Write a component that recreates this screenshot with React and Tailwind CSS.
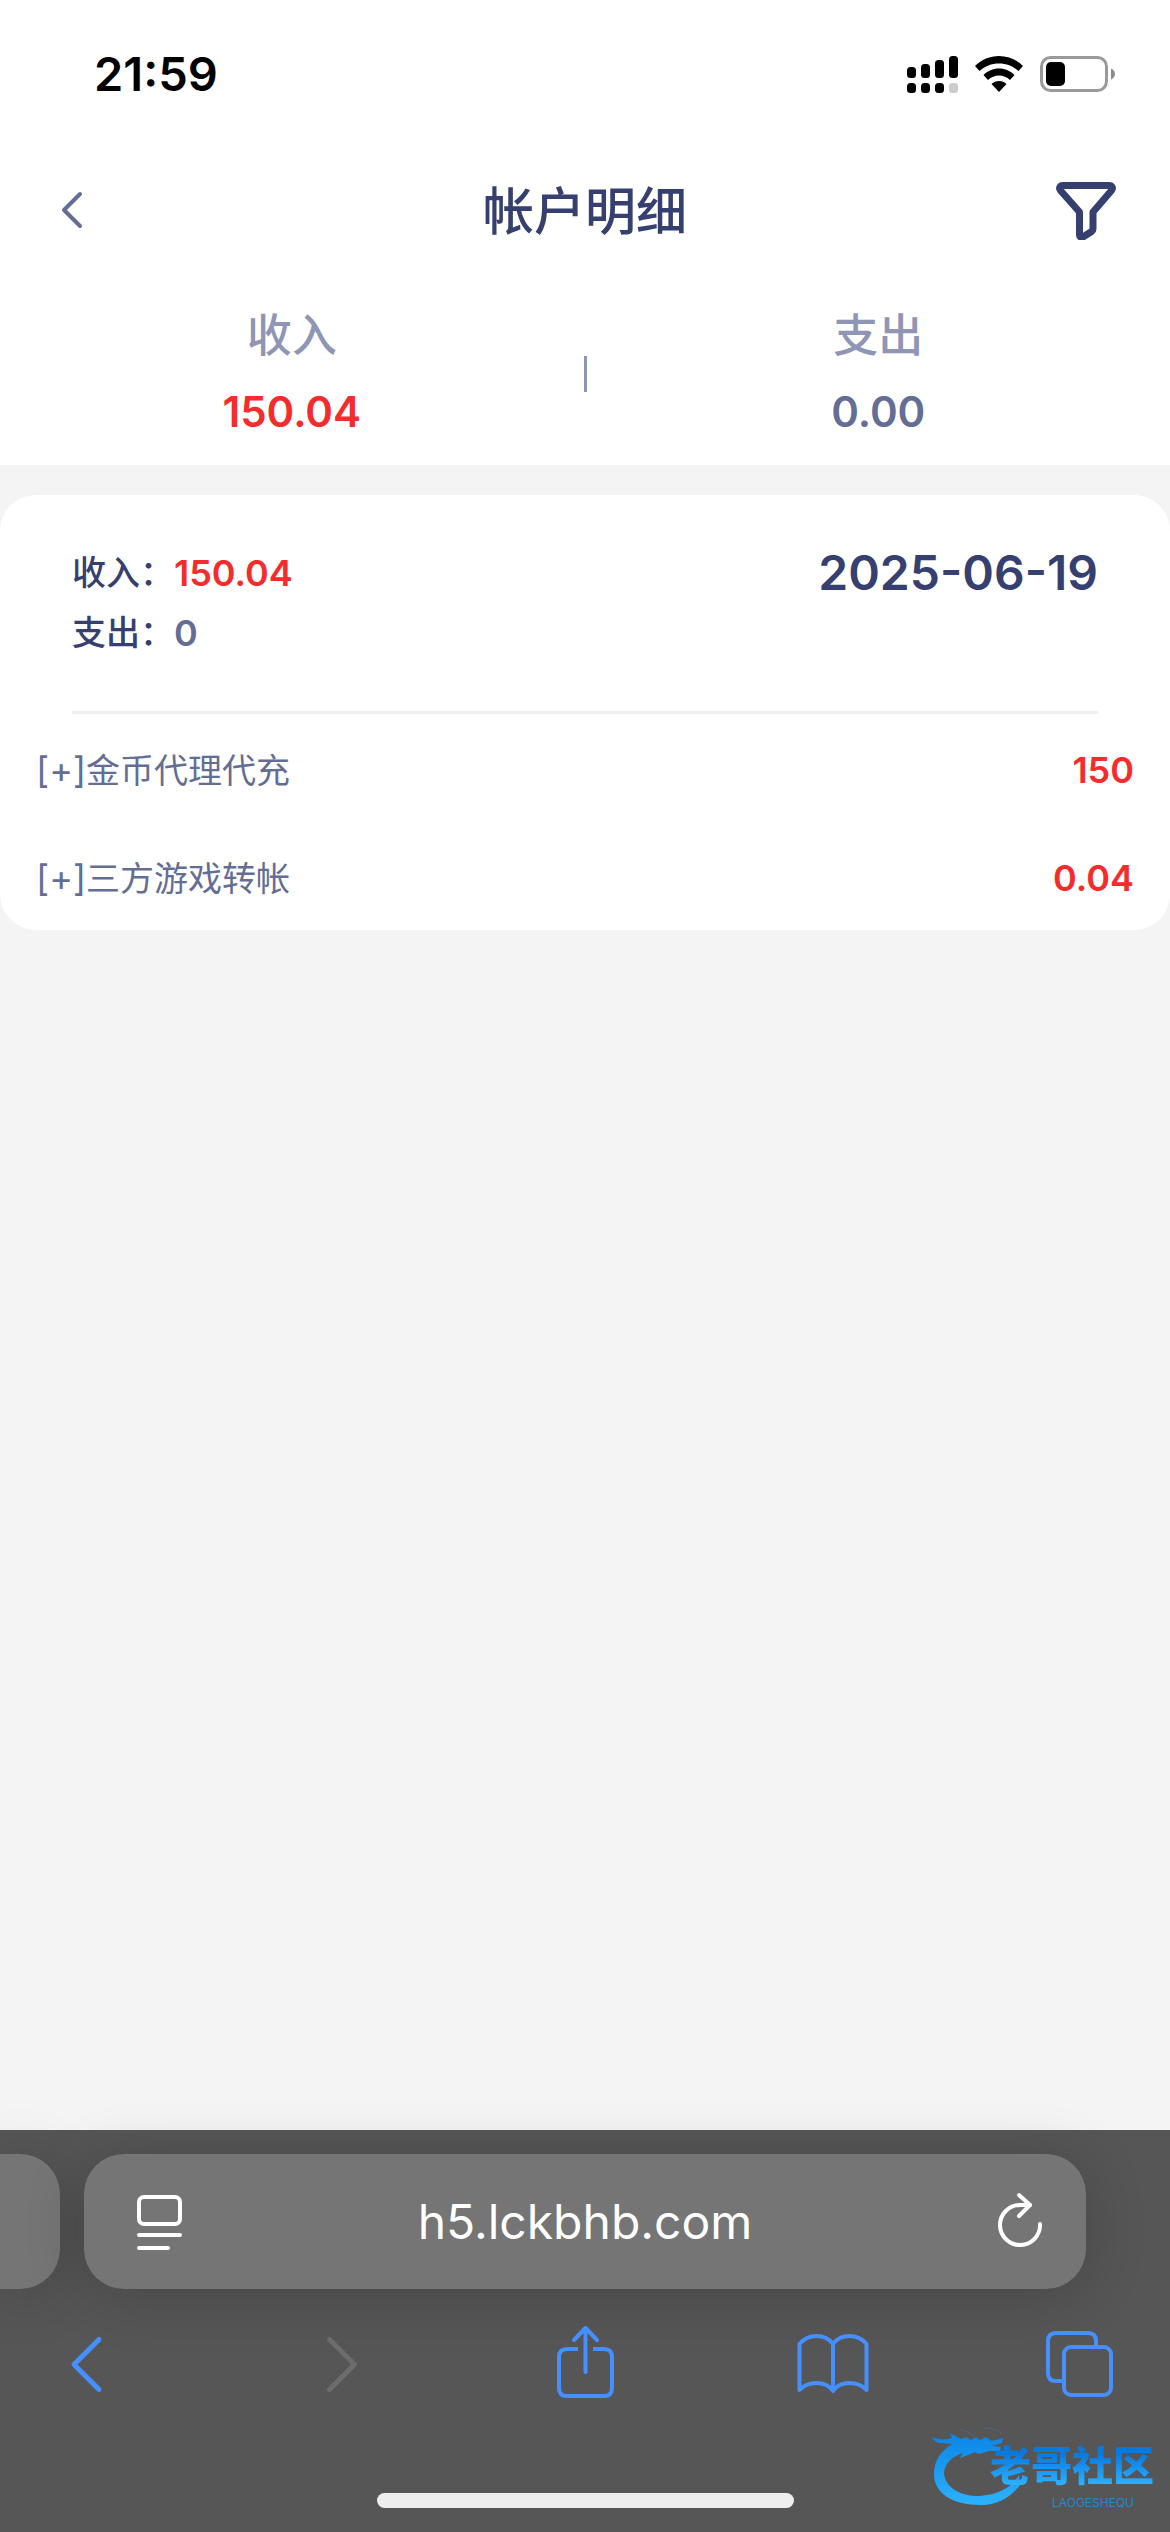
const ENTRIES = [
  { name: '金币代理代充', amount: '150' },
  { name: '三方游戏转帐', amount: '0.04' },
];

const SIGNAL_BARS = [
  { x: 0, top: 12, dot: '#000' },
  { x: 14, top: 9, dot: '#000' },
  { x: 28, top: 5, dot: '#000' },
  { x: 42, top: 1, dot: '#cbcbcb' },
];

function StatusBar() {
  return (
    <div className="flex h-[148px] items-center justify-between pr-[54px] pl-[94px]">
      <span className="text-[47px] leading-[60px] font-semibold text-black">21:59</span>
      <div className="flex items-center gap-[17px]">
        <svg width="51" height="40" viewBox="0 0 51 40" aria-label="信号">
          {SIGNAL_BARS.map((bar) => (
            <g key={bar.x}>
              <rect x={bar.x} y={bar.top + 1} width="9" height={23 - bar.top} rx="3.5" />
              <rect x={bar.x} y="29" width="9" height="10" rx="3.5" fill={bar.dot} />
            </g>
          ))}
        </svg>
        <svg width="48" height="40" viewBox="0 0 48 40" aria-label="Wi-Fi">
          <path d="M24 2C33 2 41.500 5.500 48 12L43.500 17C38 12 31.500 9.500 24 9.500S10 12 4.500 17L0 12C6.500 5.500 15 2 24 2Z" />
          <path d="M24 14.500C30 14.500 35.500 17 39.500 21L35 26C32 23 28 21.500 24 21.500S16 23 13 26L8.500 21C12.500 17 18 14.500 24 14.500Z" />
          <path d="M24 27C27 27 29.500 28 31.500 30L24 38L16.500 30C18.500 28 21 27 24 27Z" />
        </svg>
        <svg width="76" height="40" viewBox="0 0 76 40" aria-label="电量">
          <rect x="1.500" y="3.500" width="65" height="33" rx="9" fill="none" stroke="#9a9a9a" strokeWidth="3" />
          <rect x="6" y="8" width="19" height="24" rx="5" />
          <path d="M71 14.500C73.500 15.500 75 17.500 75 20S73.500 24.500 71 25.500Z" fill="#8c8c8c" />
        </svg>
      </div>
    </div>
  );
}

function PageHeader() {
  return (
    <header className="flex h-[124px] items-center justify-between px-[54px]">
      <button type="button" aria-label="返回" className="cursor-pointer">
        <svg width="60" height="60" viewBox="0 0 60 60" fill="none" stroke="#646e95" strokeWidth="4" strokeLinecap="round" strokeLinejoin="round">
          <path d="M26 14L10 30L26 46" />
        </svg>
      </button>
      <h1 className="pt-1 text-[51px] leading-[60px] font-medium text-[#364070]">帐户明细</h1>
      <button type="button" aria-label="筛选" className="cursor-pointer">
        <svg width="60" height="60" viewBox="0 0 60 60" fill="none" stroke="#364070" strokeWidth="7" strokeLinejoin="round">
          <path d="M7 5.500H53C56 5.500 57.500 8 55.500 10.500L37 32V49Q37 50.500 35.500 51.500L27 57Q23.500 58 23.500 55V32L4.500 10.500C2.500 8 4 5.500 7 5.500Z" />
        </svg>
      </button>
    </header>
  );
}

function Summary() {
  return (
    <section className="flex items-center pt-[34px] pb-[23px] text-center">
      <div className="flex-1">
        <p className="text-[45px] leading-[60px] font-medium text-[#8f96b5]">收入</p>
        <p className="mt-4 text-[42px] leading-[60px] font-semibold text-[#f52c2c]">150.04</p>
      </div>
      <div className="h-9 w-[3px] bg-[#8f96b5]" />
      <div className="flex-1">
        <p className="text-[45px] leading-[60px] font-medium text-[#8f96b5]">支出</p>
        <p className="mt-4 text-[42px] leading-[60px] font-semibold text-[#646e95]">0.00</p>
      </div>
    </section>
  );
}

function DayCard() {
  return (
    <section className="rounded-[36px] bg-white">
      <div className="mx-[72px] flex justify-between border-b-3 border-[#efefef] py-12 text-[#364070]">
        <dl className="text-[34px] leading-[60px] font-medium">
          <div className="flex">
            <dt>收入：</dt>
            <dd className="text-[36px] font-semibold text-[#f52c2c]">150.04</dd>
          </div>
          <div className="flex">
            <dt>支出：</dt>
            <dd className="text-[36px] font-semibold text-[#646e95]">0</dd>
          </div>
        </dl>
        <h2 className="text-[48px] leading-[60px] font-semibold">2025-06-19</h2>
      </div>
      <ul>
        {ENTRIES.map((entry) => (
          <li key={entry.name}>
            <button type="button" className="flex h-[108px] w-full cursor-pointer items-center justify-between px-9 pt-1">
              <span className="text-[34px] leading-[60px] text-[#646e95]">
                <span className="text-[36px]">[+]</span>
                {entry.name}
              </span>
              <span className="text-[36px] leading-[60px] font-semibold text-[#f52c2c]">{entry.amount}</span>
            </button>
          </li>
        ))}
      </ul>
    </section>
  );
}

function AddressBar() {
  return (
    <div className="flex gap-6 pr-[84px]">
      <div className="h-[135px] w-[60px] rounded-r-[40px] bg-[#757575] shadow-[0_6px_60px_rgba(0,0,0,0.18)]" />
      <div className="flex h-[135px] flex-1 items-center rounded-[40px] bg-[#757575] px-11 shadow-[0_6px_60px_rgba(0,0,0,0.18)]">
        <button type="button" aria-label="页面菜单" className="cursor-pointer">
          <svg width="64" height="64" viewBox="0 0 64 64" fill="none" stroke="#fff" strokeWidth="4" strokeLinecap="round">
            <rect x="11" y="7" width="41" height="27" rx="5" />
            <path d="M11 45H52M11 58H40" />
          </svg>
        </button>
        <input
          type="text"
          aria-label="网址"
          defaultValue="h5.lckbhb.com"
          className="min-w-0 flex-1 text-center text-[48px] leading-[60px] text-white outline-none"
        />
        <button type="button" aria-label="重新载入" className="cursor-pointer">
          <svg width="64" height="64" viewBox="0 0 64 64" fill="none" stroke="#fff" strokeWidth="4" strokeLinecap="round" strokeLinejoin="round">
            <path d="M62 34A20 20 0 1 1 42 15H52" />
            <path d="M41 5L52 15L41 26" />
          </svg>
        </button>
      </div>
    </div>
  );
}

function ToolbarButton({ label, disabled, children }) {
  return (
    <button type="button" aria-label={label} disabled={disabled} className="cursor-pointer text-[#468fff] disabled:text-[#6c6c6c]">
      <svg width="96" height="96" viewBox="0 0 96 96" fill="none" stroke="currentColor" strokeWidth="4" strokeLinecap="round" strokeLinejoin="round">
        {children}
      </svg>
    </button>
  );
}

function Toolbar() {
  return (
    <nav className="flex h-[150px] items-center justify-between px-10">
      <ToolbarButton label="后退">
        <path d="M59 23.500L34 48.500L59 73.500" strokeWidth="5" />
      </ToolbarButton>
      <ToolbarButton label="前进" disabled>
        <path d="M40.500 23.500L65.500 48.500L40.500 73.500" strokeWidth="5" />
      </ToolbarButton>
      <ToolbarButton label="分享">
        <path d="M41 33H30Q22 33 22 41V72Q22 80 30 80H67Q75 80 75 72V41Q75 33 67 33H56" strokeLinecap="butt" />
        <path d="M48.500 56V12M37 24L48.500 12L60 24" />
      </ToolbarButton>
      <ToolbarButton label="书签">
        <path d="M47 28C43 22.500 37 20 30.500 20S18 22.500 13.500 28V74C18 69 24 67 30.500 67S43 69 47 75C51 69 57 67 63.500 67S76 69 80.500 74V28C76 22.500 70 20 63.500 20S51 22.500 47 28ZM47 28V75" />
      </ToolbarButton>
      <ToolbarButton label="标签页">
        <rect x="30" y="31" width="47" height="48" rx="7" />
        <path d="M30 65H22Q14 65 14 57V25Q14 17 22 17H54Q62 17 62 25V31" strokeLinecap="butt" />
      </ToolbarButton>
    </nav>
  );
}

function Watermark() {
  return (
    <div className="absolute right-4 bottom-6 flex h-20 w-[222px] flex-col items-end">
      <svg className="absolute inset-0" width="222" height="80" viewBox="0 0 222 80">
        <defs>
          <linearGradient id="dragon" x1="0" y1="0" x2="0" y2="1">
            <stop offset="0" stopColor="#0b84e6" />
            <stop offset="1" stopColor="#2cb2ff" />
          </linearGradient>
        </defs>
        <path
          fill="url(#dragon)"
          d="M0 9C6 12 13 12 20 10L18 5L29 11L34 9L39 12L44 9L48 12L54 9L60 13L71 10L70 15L60 18L69 19L68 23L57 23L47 26L43 24L36 27L28 30L31 25C18 29 12 37 12 46C14 60 28 68 47 68C66 67 79 60 87 47L88 57C79 69 66 77 49 77C20 77 2 65 2 46C2 32 9 23 20 16L10 15C5 15 2 13 0 9Z"
        />
        <path fill="none" stroke="#4a6a80" strokeWidth="1" d="M28 1Q38 4 43 9M52 0Q67 1 70 6" />
      </svg>
      <span className="relative mt-2 bg-linear-to-b from-[#0879df] from-30% to-[#2bb0ff] to-80% bg-clip-text text-[41px] leading-[60px] font-black text-transparent">
        老哥社区
      </span>
      <span className="relative pr-5 text-[12px] leading-[14px] text-[#2388cf]">LAOGESHEQU</span>
    </div>
  );
}

export default function App() {
  return (
    <div className="flex min-h-screen flex-col bg-[#f4f4f4] font-['Inter','Noto_Sans_CJK_SC',sans-serif]" lang="zh-CN">
      <div className="bg-white">
        <StatusBar />
        <PageHeader />
        <Summary />
      </div>
      <main className="flex-1 pt-[30px]">
        <DayCard />
      </main>
      <footer className="relative bg-[#565656] pt-6 pb-6">
        <AddressBar />
        <Toolbar />
        <div className="mx-auto mt-[54px] h-[15px] w-[417px] rounded-full bg-[#eee]" />
        <Watermark />
      </footer>
    </div>
  );
}
